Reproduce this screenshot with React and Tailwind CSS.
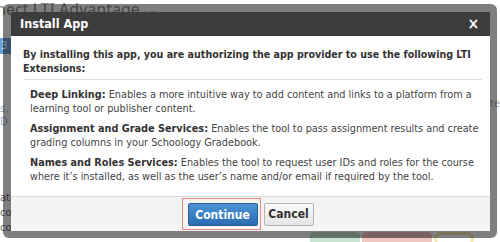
import React from 'react';

const extensions = [
    {
        name: 'Deep Linking:',
        text: 'Enables a more intuitive way to add content and links to a platform from a learning tool or publisher content.',
    },
    {
        name: 'Assignment and Grade Services:',
        text: 'Enables the tool to pass assignment results and create grading columns in your Schoology Gradebook.',
    },
    {
        name: 'Names and Roles Services:',
        text: 'Enables the tool to request user IDs and roles for the course where it\u2019s installed, as well as the user\u2019s name and/or email if required by the tool.',
    },
];

const App = () => {
    return (
        <div className="relative w-[500px] h-[242px] overflow-hidden bg-white font-['DejaVu_Sans_Condensed','DejaVu_Sans',sans-serif] font-stretch-condensed">
            {/* page behind the modal */}
            <div className="absolute inset-0">
                <div className="whitespace-nowrap text-[16px] leading-[18px] text-[#8a8a8a] -ml-[4px] font-['Noto_Sans',sans-serif]">
                    nect LTI Advantage <span className="text-[10px] text-[#bbb]">{'\u00b7 \u00b7\u00b7\u00b7'}</span>
                </div>
                <div className="mt-[18px] w-[14px] h-[16px] bg-[#6aa3d8] text-white text-[11px] leading-[16px] pl-[1px] whitespace-nowrap overflow-hidden">3 A</div>
                <div className="mt-[48px] text-[11px] leading-[13px] text-[#9bb0c8]">s, H<br />D</div>
                <div className="mt-[62px] text-[11px] leading-[15px] text-[#666]">ata<br />con<br />co</div>
                <div className="absolute right-0 top-[96px] text-[11px] text-[#aaa]">te</div>
                <div className="absolute left-[310px] top-[232px] flex gap-[2px] opacity-60">
                    <div className="w-[50px] h-[14px] rounded-[4px] bg-[#9fd4b4]"></div>
                    <div className="w-[70px] h-[14px] rounded-[4px] bg-[#e8a29a]"></div>
                    <div className="w-[40px] h-[14px] rounded-full border-[3px] border-[#f2d67c]"></div>
                </div>
            </div>

            {/* modal */}
            <div className="absolute left-[3px] top-[4px] w-[494px] h-[234px] rounded-[6px] bg-black/50 pl-[8px] pr-[7px] pt-[8px] pb-[7px]">
                <div className="flex flex-col h-full">
                    <div className="h-[24px] shrink-0 bg-[#3d3d3d] flex items-center justify-between pl-[9px] pr-[11px] text-white">
                        <span className="text-[12.5px] font-bold">Install App</span>
                        <span className="text-[15px] font-bold leading-none">×</span>
                    </div>

                    <div className="flex-1 bg-white pl-[12px] pr-[8px] pt-[11px] text-[#333]">
                        <p className="font-bold text-[10.6px] leading-[14px] pb-[4px] border-b border-[#e3e3e3]">
                            By installing this app, you are authorizing the app provider to use the following LTI Extensions:
                        </p>
                        <ul className="pl-[7px] pr-[2px] pt-[8px]">
                            {extensions.map((ext, i) => (
                                <li key={i} className="text-[10.8px] leading-[13.5px] text-[#444] mb-[7px]">
                                    <span className="font-bold text-[#333]">{ext.name}</span> {ext.text}
                                </li>
                            ))}
                        </ul>
                    </div>

                    <div className="h-[35px] shrink-0 bg-[#f4f4f4] border-t border-[#dcdcdc] flex items-center justify-center gap-[3px] pr-[6px]">
                        <span className="border border-[#e58a8a] pl-[5px] pr-[2px] py-[3px]">
                            <button className="w-[70px] h-[23px] rounded-[2px] border border-[#2a5f96] bg-gradient-to-b from-[#4b94d4] to-[#2b6db3] text-white text-[12px] font-bold">
                                Continue
                            </button>
                        </span>
                        <button className="w-[50px] h-[23px] rounded-[2px] border border-[#b4b4b4] bg-gradient-to-b from-[#fbfbfb] to-[#e4e4e4] text-[#333] text-[12px] font-bold">
                            Cancel
                        </button>
                    </div>
                </div>
            </div>
        </div>
    );
};

export default App;
